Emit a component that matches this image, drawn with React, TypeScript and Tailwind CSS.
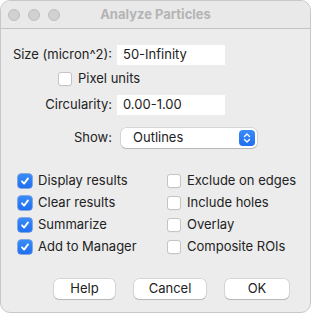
import React from "react";

function Check({ checked }: { checked: boolean }) {
  if (checked) {
    return (
      <div className="w-[14px] h-[14px] rounded-[3px] bg-gradient-to-b from-[#3a8bf8] to-[#1f6ef0] flex items-center justify-center shadow-[0_0_0_0.5px_#1a62d6]">
        <svg width="10" height="10" viewBox="0 0 10 10">
          <path d="M2 5.3 L4.1 7.6 L8 2.4" fill="none" stroke="white" strokeWidth="1.8" strokeLinecap="round" strokeLinejoin="round" />
        </svg>
      </div>
    );
  }
  return (
    <div className="w-[14px] h-[14px] rounded-[3px] bg-white border border-[#c4c4c4] shadow-[0_0.5px_0.5px_rgba(0,0,0,0.05)]" />
  );
}

function Row({ checked, label }: { checked: boolean; label: string }) {
  return (
    <div className="h-[22px] flex items-center gap-[6px]">
      <Check checked={checked} />
      <span>{label}</span>
    </div>
  );
}

function Btn({ label, w }: { label: string; w: string }) {
  return (
    <div
      className={`${w} h-[20px] rounded-[5px] bg-white flex items-center justify-center shadow-[0_0_0_0.5px_rgba(0,0,0,0.18),0_1px_1px_rgba(0,0,0,0.15)]`}
    >
      {label}
    </div>
  );
}

export default function App() {
  return (
    <div className="w-[311px] h-[313px] bg-white">
      <div
        className="w-[311px] h-[313px] rounded-[10px] bg-[#ececec] border border-[#c8c8c8] overflow-hidden text-[13px] text-[#222222]"
        style={{ fontFamily: "Inter, 'Liberation Sans', sans-serif" }}
      >
        <div className="h-[28px] border-b border-[#c4c4c4] bg-[#e9e9e9] flex items-center relative">
          <div className="flex gap-[8px] pl-[7px]">
            <div className="w-[12px] h-[12px] rounded-full bg-[#d1d1d1] border border-[#bdbdbd]" />
            <div className="w-[12px] h-[12px] rounded-full bg-[#d1d1d1] border border-[#bdbdbd]" />
            <div className="w-[12px] h-[12px] rounded-full bg-[#d1d1d1] border border-[#bdbdbd]" />
          </div>
          <div className="absolute inset-0 flex items-center justify-center font-bold text-[#b4b4b4]">
            Analyze Particles
          </div>
        </div>

        <div className="pt-[16px]">
          <div className="flex items-center h-[20px]">
            <div className="w-[111px] text-right">Size (micron^2):</div>
            <div className="ml-[5px] w-[108px] h-[20px] bg-white flex items-center pl-[6px]">50-Infinity</div>
          </div>
          <div className="mt-[7px] h-[14px] flex items-center gap-[6px] pl-[57px]">
            <Check checked={false} />
            <span>Pixel units</span>
          </div>
          <div className="mt-[9px] flex items-center h-[20px]">
            <div className="w-[111px] text-right">Circularity:</div>
            <div className="ml-[5px] w-[108px] h-[20px] bg-white flex items-center pl-[6px]">0.00-1.00</div>
          </div>
          <div className="mt-[13px] flex items-center h-[20px]">
            <div className="w-[111px] text-right">Show:</div>
            <div className="ml-[9px] w-[136px] h-[20px] bg-white rounded-[5px] flex items-center justify-between pl-[12px] pr-[2px] shadow-[0_0_0_0.5px_rgba(0,0,0,0.18),0_1px_1px_rgba(0,0,0,0.15)]">
              <span>Outlines</span>
              <div className="w-[16px] h-[16px] rounded-[4px] bg-gradient-to-b from-[#3a8bf8] to-[#1f6ef0] flex items-center justify-center">
                <svg width="10" height="12" viewBox="0 0 10 12">
                  <path d="M2.5 4.5 L5 2 L7.5 4.5 M2.5 7.5 L5 10 L7.5 7.5" fill="none" stroke="white" strokeWidth="1.4" strokeLinecap="round" strokeLinejoin="round" />
                </svg>
              </div>
            </div>
          </div>

          <div className="mt-[22px] flex">
            <div className="pl-[17px] w-[166px]">
              <Row checked label="Display results" />
              <Row checked label="Clear results" />
              <Row checked label="Summarize" />
              <Row checked label="Add to Manager" />
            </div>
            <div>
              <Row checked={false} label="Exclude on edges" />
              <Row checked={false} label="Include holes" />
              <Row checked={false} label="Overlay" />
              <Row checked={false} label="Composite ROIs" />
            </div>
          </div>

          <div className="mt-[21px] flex gap-[19px] pl-[53px]">
            <Btn label="Help" w="w-[61px]" />
            <Btn label="Cancel" w="w-[72px]" />
            <Btn label="OK" w="w-[64px]" />
          </div>
        </div>
      </div>
    </div>
  );
}
